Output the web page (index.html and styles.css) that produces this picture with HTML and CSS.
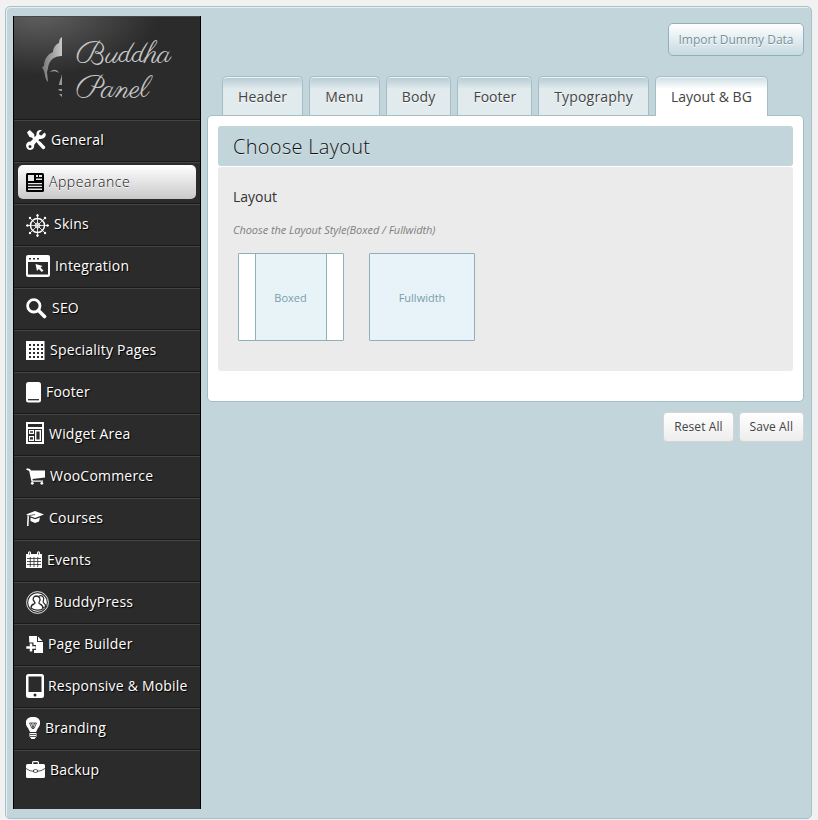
FILE: index.html
```html
<!DOCTYPE html>
<html lang="en">
<head>
<meta charset="utf-8">
<title>Buddha Panel</title>
<link rel="stylesheet" href="styles.css">
</head>
<body>
<div class="panel">
  <aside class="sidebar">
    <div class="brand">
      <svg class="brand-mark" width="20" height="61" viewBox="0 0 20 61">
        <defs><linearGradient id="silver" x1="0" x2="1"><stop offset="0" stop-color="#777"/><stop offset="1" stop-color="#c8c8c8"/></linearGradient></defs>
        <path fill="url(#silver)" d="M20 0v19C12 19 7 23 6 31l-1 4 1 10C3 42 3 37 2 34L0 30l2-1C2 22 6 17 11 15c0-4 3-8 6-9 0-3 1-5 3-6z"/>
        <path fill="#999" d="M8 35c3-3 7-3 9 1-3-2-6-2-9-1zM20 37v11h-3c0-3 2-6 3-11zM16 52h4v2h-2zM17 57h3v3z"/>
      </svg>
      <svg class="brand-name" width="102" height="80" viewBox="0 0 102 80">
        <text x="3" y="25" textLength="95" lengthAdjust="spacingAndGlyphs">Buddha</text>
        <text x="3" y="60" textLength="73" lengthAdjust="spacingAndGlyphs">Panel</text>
      </svg>
    </div>
    <ul class="menu">
      <li><a><svg width="20" height="20" viewBox="0 0 20 20"><path d="M3 1l4 4v2l8.500 8M6.500 14l7-7" fill="none" stroke="currentColor" stroke-width="2.600"/><path d="M1 2.500L3 .5l4.500 3v3L6 7.500 3.500 7zM18.500 2.500l-3 3-2-.5-.5-2L16 0c-3-.6-6 1-5.500 5L8 8l-3.500 3.500C1 11.500-.5 14 .3 17c.8 3 5 4 7 1.500 1-1.300 1-2.500.8-3.500L12 9c4 .5 8-1 7.800-5zM4 15a1.500 1.500 0 110 3 1.500 1.500 0 010-3zM11.500 13.500l2.500-2 5 5c1 1.500-1 3.500-2.500 2.500z" fill-rule="evenodd"/></svg>General</a></li>
      <li><a class="active"><svg width="18" height="19" viewBox="0 0 18 19"><rect width="18" height="19" rx="1.500"/><path d="M2 2h6v6H2zM10 2h2v2h-2zM10 5.500h6v1.500h-6zM13 2h3v2h-3zM2 10h14v1.300H2zM2 12.800h14v1.300H2zM2 15.600h14v1.300H2z" fill="#e6e6e6"/></svg>Appearance</a></li>
      <li><a><svg class="lowered" width="23" height="23" viewBox="0 0 23 23"><g fill="none" stroke="currentColor"><circle cx="11.500" cy="11.500" r="7" stroke-width="1.500"/><circle cx="11.500" cy="11.500" r="2.500" stroke-width=".9"/><path d="M11.500 0v23M0 11.500h23M4 4l15 15M19 4l-15 15" stroke-width=".8"/></g><g><circle cx="11.500" cy="1.500" r="1.200"/><circle cx="11.500" cy="21.500" r="1.200"/><circle cx="1.500" cy="11.500" r="1.200"/><circle cx="21.500" cy="11.500" r="1.200"/><circle cx="4" cy="4" r="1.200"/><circle cx="19" cy="4" r="1.200"/><circle cx="4" cy="19" r="1.200"/><circle cx="19" cy="19" r="1.200"/></g></svg>Skins</a></li>
      <li><a><svg width="24" height="22" viewBox="0 0 24 22"><path fill-rule="evenodd" d="M2 0h20q2 0 2 2v18q0 2-2 2H2q-2 0-2-2V2q0-2 2-2zm0 7v12.500h20V7zM3 3v1.500h2V3zm4 0v1.500h2V3zm4 0v1.500h2V3z"/><path d="M9.500 9l7 2-2 1.500 3 3-1.700 1.600-3-3L11 16z"/></svg>Integration</a></li>
      <li><a><svg width="21" height="21" viewBox="0 0 21 21"><circle cx="7.800" cy="7.800" r="6.200" fill="none" stroke="currentColor" stroke-width="2.800"/><path d="M12.500 12.500l6 6" stroke="currentColor" stroke-width="3.600" stroke-linecap="round"/></svg>SEO</a></li>
      <li><a><svg width="19" height="19" viewBox="0 0 19 19"><rect width="18.500" height="19"/><path d="M3 4h14M3 8h14M3 12h14M3 16h14" stroke="#2b2b2b" stroke-width="2" stroke-dasharray="2 2"/></svg>Speciality Pages</a></li>
      <li><a><svg width="15" height="21" viewBox="0 0 15 21"><rect width="15" height="20.500" rx="2.500"/><path d="M2 17.700h11" stroke="#2b2b2b" stroke-width="1.300"/></svg>Footer</a></li>
      <li><a><svg class="raised" width="18" height="22" viewBox="0 0 18 22"><path fill-rule="evenodd" d="M0 0h18v22H0zM2 2v3h14V2zm0 5v13h14V7zm1 1h5v4H3zm1 1.200v1.600h3V9.200zM3 14h5v5H3zm1 1.300v2.200h3v-2.200zM9 8h6v11H9zm1.400 1.400v8.200h3.200V9.400z"/></svg>Widget Area</a></li>
      <li><a><svg width="19" height="17" viewBox="0 0 19 17"><path d="M0 1.500l1-1.200 3 .7 1 1.500h14v7L6.500 11l.3 1.500H17v1.200H5.500L3.200 3z"/><circle cx="6.300" cy="15.300" r="1.400"/><circle cx="15.800" cy="15.300" r="1.400"/></svg>WooCommerce</a></li>
      <li><a><svg width="18" height="15" viewBox="0 0 18 15"><path d="M9 0l9 3.500L9 7 3 4.800 2.500 15H1L1.500 4 0 3.500zM4.500 6.500L9 8.300l5-1.800-1 4L9 12l-4.500-2z"/><path d="M9 3.500L2.200 4.800" stroke="#2b2b2b" stroke-width=".7"/></svg>Courses</a></li>
      <li><a><svg class="raised" width="16" height="17" viewBox="0 0 16 17"><path d="M0 3h2V1.500Q3.500-1 5 1.500V3h6V1.500q1.500-2.500 3 0V3h2v14H0z"/><path d="M1 7.500h14M1 10.500h14M1 13.500h14M4.300 6v10M8 6v10M11.700 6v10M3.500 1.500v2M12.500 1.500v2" stroke="#2b2b2b" stroke-width=".8" fill="none"/></svg>Events</a></li>
      <li><a><svg width="23" height="23" viewBox="0 0 23 23"><circle cx="11.500" cy="11.500" r="10.900" fill="none" stroke="currentColor" stroke-width=".9"/><circle cx="11.500" cy="11.500" r="9.300"/><path d="M13 5.200c3-1.500 5.500 1 4.500 4-.5 1.500-1 2 .5 3 1.200.8 1.800 2 1.500 3.800l-2.500.3" fill="none" stroke="#2b2b2b" stroke-width="1.200"/><path d="M10.500 5a3.600 3.600 0 013 5.500c-1 1.500-.8 2 .7 2.600 2 .9 2.800 2.400 2.800 4.600-3 2-8.500 2-12-.7 0-2.500 1-3.500 3-4 1.300-.4 1.200-1.300.2-2.500C6 8 7.500 5 10.500 5z" fill="#fff" stroke="#2b2b2b" stroke-width="1.300"/></svg>BuddyPress</a></li>
      <li><a><svg width="17" height="17" viewBox="0 0 17 17"><path d="M3 0h8v6h6v11H8v-3H3.500zM12 .5l4.500 4.500H12z"/><path d="M5 6.500v10M0 11.500h10" stroke="#2b2b2b" stroke-width="5"/><path d="M5 7.500v8M.3 11.500h9.400" stroke="currentColor" stroke-width="2.500"/></svg>Page Builder</a></li>
      <li><a class="wide"><svg width="18" height="24" viewBox="0 0 18 24"><path fill-rule="evenodd" d="M2.500 0h13Q18 0 18 2.500v19q0 2.500-2.500 2.500h-13Q0 24 0 21.500v-19Q0 0 2.500 0zM2.500 2.500v15.500h13V2.500zM9 19.500a1.500 1.500 0 100 3 1.500 1.500 0 000-3z"/></svg>Responsive &amp; Mobile</a></li>
      <li><a><svg width="14" height="22" viewBox="0 0 14 22"><path d="M7 0c9 0 8 8 5 11l-2 4H4l-2-4C-1 8-2 0 7 0zM3.500 16h7v3.500L8.500 22h-3l-2-2.500z"/><path d="M3.500 6h7L8 11.500H6zM5.500 6l1.500 5 1.500-5M4 17.500h6M4 19.500h6" fill="none" stroke="#2b2b2b" stroke-width=".8"/></svg>Branding</a></li>
      <li><a><svg class="raised" width="19" height="17" viewBox="0 0 19 17"><path fill-rule="evenodd" d="M6 3V1.500Q6 0 7.500 0h4Q13 0 13 1.500V3h4.500Q19 3 19 4.500v11q0 1.500-1.500 1.500h-16Q0 17 0 15.500v-11Q0 3 1.500 3zm1.300 0h4.400V1.300H7.300z"/><path d="M0 7.500q4 3 7.500 2.800M11.500 10.300Q15 10.300 19 7.500M7.500 9q2-1 4 0v2q-2 1-4 0z" fill="none" stroke="#2b2b2b" stroke-width=".8"/></svg>Backup</a></li>
    </ul>
  </aside>

  <main class="content">
    <div class="toolbar"><button class="btn import">Import Dummy Data</button></div>
    <nav class="tabs">
      <a class="tab">Header</a><a class="tab">Menu</a><a class="tab">Body</a><a class="tab tight">Footer</a><a class="tab">Typography</a><a class="tab tight current">Layout &amp; BG</a>
    </nav>
    <section class="card">
      <h2>Choose Layout</h2>
      <div class="option">
        <h3>Layout</h3>
        <p>Choose the Layout Style(Boxed / Fullwidth)</p>
        <div class="choices">
          <div class="choice boxed"><span>Boxed</span></div>
          <div class="choice"><span>Fullwidth</span></div>
        </div>
      </div>
    </section>
    <div class="actions"><button class="btn">Reset All</button><button class="btn">Save All</button></div>
  </main>
</div>
</body>
</html>
```
FILE: styles.css
```css
* { box-sizing: border-box; }
body {
  margin: 0;
  padding: 6px 6px 1px 5px;
  height: 820px;
  overflow: hidden;
  background: #f1f1f1;
  font-family: "Open Sans", "Noto Sans", sans-serif;
  color: #333;
}
.panel {
  display: flex;
  height: 813px;
  padding: 9px 7px 8px;
  background: #c2d5db;
  border: 1px solid #a9c0c8;
  border-radius: 5px;
  box-shadow: inset 1px 1px 0 #e6f0f3;
}
.sidebar {
  flex: none;
  width: 188px;
  height: 793px;
  background: #2b2b2b;
  border: solid #000;
  border-width: 0 1px;
}
.brand {
  display: flex;
  height: 103px;
  padding: 20px 0 0 28px;
  gap: 11px;
  border-top: 1px solid #484848;
  background: radial-gradient(ellipse 120px 62px at 25px -4px, #606060, #2b2b2b);
}
.brand svg { flex: none; }
.brand-name { overflow: visible; }
.brand-name text {
  font: 30px "Parisienne", "Z003", "URW Chancery L", cursive;
  fill: #c6c6c6;
}
.menu { margin: 0; padding: 0; list-style: none; }
.menu li {
  height: 42px;
  padding: 4px 4px 4px;
  border-top: 1px solid #1a1a1a;
  box-shadow: inset 0 1px 0 #444;
}
.menu a {
  display: flex;
  align-items: center;
  gap: 5px;
  height: 34px;
  padding: 0 0 2px 8px;
  border-radius: 5px;
  font-size: 14px;
  line-height: 20px;
  letter-spacing: .2px;
  white-space: nowrap;
  color: #fff;
  text-shadow: 1px 1px 1px #000;
}
.menu a.wide { gap: 4px; }
.menu svg { flex: none; fill: currentColor; position: relative; top: 0; }
.menu svg.raised { top: -1px; }
.menu svg.lowered { top: 1px; }
.menu a.active {
  margin-top: -1px;
  padding-bottom: 0;
  color: #111;
  font-weight: 300;
  letter-spacing: .55px;
  text-shadow: 0 1px 0 #fff;
  background: linear-gradient(#fff, #c9c9c9);
}
.menu .active svg { color: #000; }
.content { flex: 1; padding: 7px 0 0 6px; }
.toolbar { display: flex; justify-content: flex-end; height: 53px; }
.btn {
  height: 30px;
  padding: 0 10px;
  border: 1px solid #d5d5d5;
  border-radius: 4px;
  background: linear-gradient(#fff, #ededed);
  font: 12px/18px "Open Sans", sans-serif;
  letter-spacing: .08px;
  color: #444;
  white-space: nowrap;
}
.btn.import {
  width: 136px;
  height: 33px;
  padding: 0;
  letter-spacing: 0;
  border-color: #93b0ba;
  border-radius: 5px;
  background: linear-gradient(#fff, #c6dae1);
  color: #75909a;
  text-shadow: 0 1px 0 #fff;
}
.tabs { display: flex; gap: 6px; height: 39px; padding-left: 15px; }
.tab {
  height: 39px;
  padding: 10px 15px 0;
  border: 1px solid #a5bdc5;
  border-bottom: 0;
  border-radius: 5px 5px 0 0;
  background: linear-gradient(#b3cad2, #e1eaed 12px);
  box-shadow: inset 0 1px 0 #eef4f6;
  font-size: 14px;
  line-height: 20px;
  letter-spacing: .19px;
  color: #444;
  text-shadow: 0 1px 0 #fff;
}
.tab.tight { letter-spacing: 0; }
.tab.current { height: 40px; background: linear-gradient(#cbdde3, #fff 12px); position: relative; }
.card {
  height: 287px;
  padding: 10px;
  background: #fff;
  border: 1px solid #a5bdc5;
  border-radius: 5px;
}
.card h2 {
  height: 40px;
  margin: 0 0 1px;
  padding: 0 15px;
  border-radius: 3px;
  background: #c2d5db;
  font-size: 20px;
  line-height: 41px;
  font-weight: 300;
  letter-spacing: .3px;
  color: #111;
  text-shadow: 0 1px 0 #dde8ec;
}
.option {
  height: 204px;
  padding: 20px 15px;
  border-radius: 3px;
  background: #ebebeb;
}
.option h3 { margin: 0; font-size: 14px; line-height: 20px; font-weight: 400; color: #333; }
.option p { margin: 15px 0 0; font-size: 11px; line-height: 16px; letter-spacing: -.05px; font-style: italic; color: #808080; }
.choices { display: flex; gap: 25px; margin: 15px 0 0 5px; }
.choice {
  display: flex;
  width: 106px;
  height: 88px;
  align-items: center;
  justify-content: center;
  border: 1px solid #8db0bb;
  border-radius: 1px;
  background: #e7f3f9;
  font-size: 11px;
  font-weight: 500;
  color: #7b9da8;
}
.boxed { background: #fff; }
.boxed span {
  display: flex;
  width: 72px;
  height: 86px;
  margin-right: 1px;
  align-items: center;
  justify-content: center;
  border: solid #8db0bb;
  border-width: 0 1px;
  background: #e7f3f7;
}
.actions { display: flex; justify-content: flex-end; gap: 5px; margin-top: 10px; }
```
